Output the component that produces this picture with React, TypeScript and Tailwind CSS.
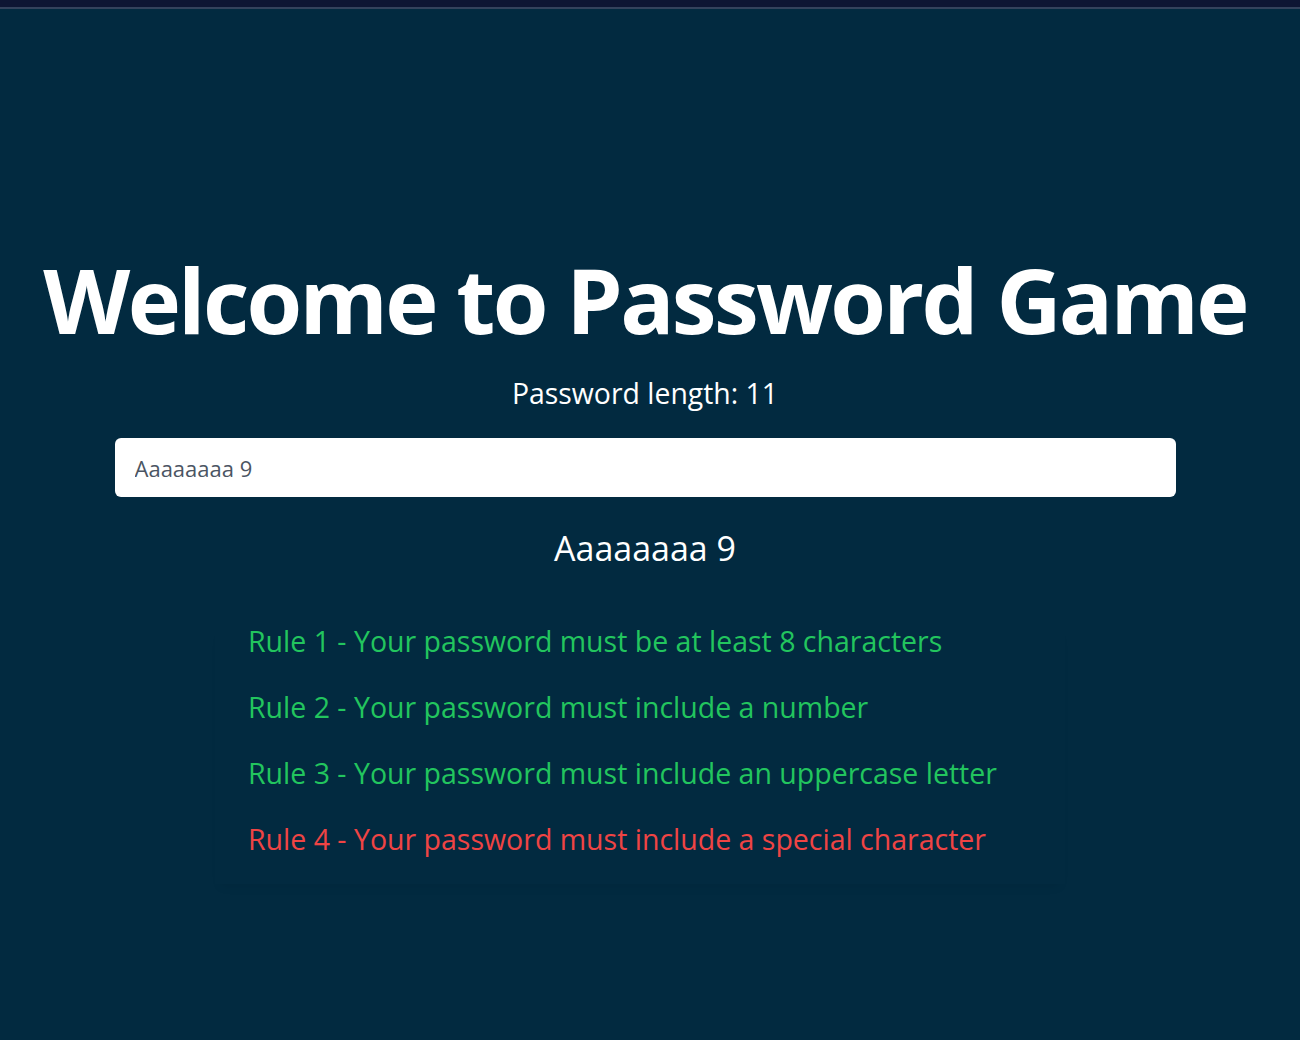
import { useState } from 'react'

const rules = [
  { id: 1, text: 'Your password must be at least 8 characters', test: (v: string) => v.length >= 8 },
  { id: 2, text: 'Your password must include a number', test: (v: string) => /\d/.test(v) },
  { id: 3, text: 'Your password must include an uppercase letter', test: (v: string) => /[A-Z]/.test(v) },
  { id: 4, text: 'Your password must include a special character', test: (v: string) => /[^A-Za-z0-9\s]/.test(v) },
]

export default function App() {
  const [password, setPassword] = useState('Aaaaaaaa 9')

  return (
    <div className="min-h-[1040px] bg-[#022a40] font-['Open_Sans',sans-serif] text-white">
      <div className="h-[9px] border-b-2 border-[#34435c] bg-[#0e1633]" />

      <main className="flex flex-col items-center pr-[10px] pt-[245px]">
        <h1 className="whitespace-nowrap text-[90px] font-bold leading-none tracking-[-0.03em]">
          Welcome to Password Game
        </h1>

        <p className="mt-[35px] text-[28.4px] leading-none">Password length: {password.length + 1}</p>

        <input
          className="mt-[31px] h-[59px] w-[1061px] rounded-md bg-white px-5 text-[22px] text-[#4b5563] outline-none"
          onChange={(e) => setPassword(e.target.value)}
          type="text"
          value={password}
        />

        <div className="mt-[34px] text-[34px] leading-none">{password}</div>

        <ul className="mr-[10px] mt-[58px] w-[850px] space-y-[30px] px-[33px] pb-[27px] shadow-[0_8px_10px_-6px_rgba(0,0,0,0.08)]">
          {rules.map((rule) => (
            <li
              className={`text-[28.5px] leading-9 ${rule.test(password) ? 'text-[#22c55e]' : 'text-[#ef4444]'}`}
              key={rule.id}
            >
              Rule {rule.id} - {rule.text}
            </li>
          ))}
        </ul>
      </main>
    </div>
  )
}
